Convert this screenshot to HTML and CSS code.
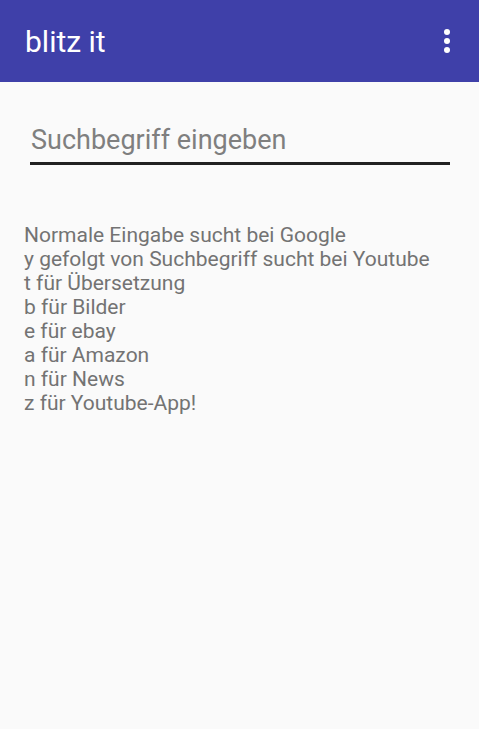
FILE: index.html
```html
<!DOCTYPE html>
<html lang="de">
<head>
    <meta charset="UTF-8">
    <meta name="viewport" content="width=device-width, initial-scale=1.0">
    <title>blitz it</title>
    <link rel="stylesheet" href="styles.css">
</head>
<body>
    <header class="toolbar">
        <h1 class="toolbar-title">blitz it</h1>
        <button class="menu-button" aria-label="Mehr Optionen">
            <svg width="6" height="24" viewBox="0 0 6 24">
                <circle cx="3" cy="3" r="3" fill="#fff"/>
                <circle cx="3" cy="12" r="3" fill="#fff"/>
                <circle cx="3" cy="21" r="3" fill="#fff"/>
            </svg>
        </button>
    </header>

    <main class="content">
        <input type="text" class="search" placeholder="Suchbegriff eingeben">

        <p class="help">
            Normale Eingabe sucht bei Google<br>
            y gefolgt von Suchbegriff sucht bei Youtube<br>
            t für Übersetzung<br>
            b für Bilder<br>
            e für ebay<br>
            a für Amazon<br>
            n für News<br>
            z für Youtube-App!
        </p>
    </main>
</body>
</html>
```

FILE: styles.css
```css
body {
    margin: 0;
    background-color: #fafafa;
    font-family: Roboto, "Noto Sans", sans-serif;
}

.toolbar {
    display: flex;
    align-items: center;
    justify-content: space-between;
    height: 82px;
    padding: 0 29px 0 25px;
    background-color: #3f40a9;
}

.toolbar-title {
    margin: 0;
    font-size: 30px;
    font-weight: 400;
    color: #fff;
}

.menu-button {
    display: flex;
    padding: 0;
    background: none;
    border: none;
    cursor: pointer;
}

.content {
    padding: 42px 29px 0 30px;
}

.search {
    display: block;
    box-sizing: border-box;
    width: 100%;
    padding: 0 0 6px 1px;
    border: none;
    border-bottom: 3px solid #212121;
    background: transparent;
    font-family: Roboto, sans-serif;
    font-size: 27px;
    color: #212121;
    outline: none;
}

.search::placeholder {
    color: #7f7f7f;
}

.help {
    margin: 58px 0 0 -6px;
    font-size: 21px;
    line-height: 24px;
    color: #737373;
}
```
